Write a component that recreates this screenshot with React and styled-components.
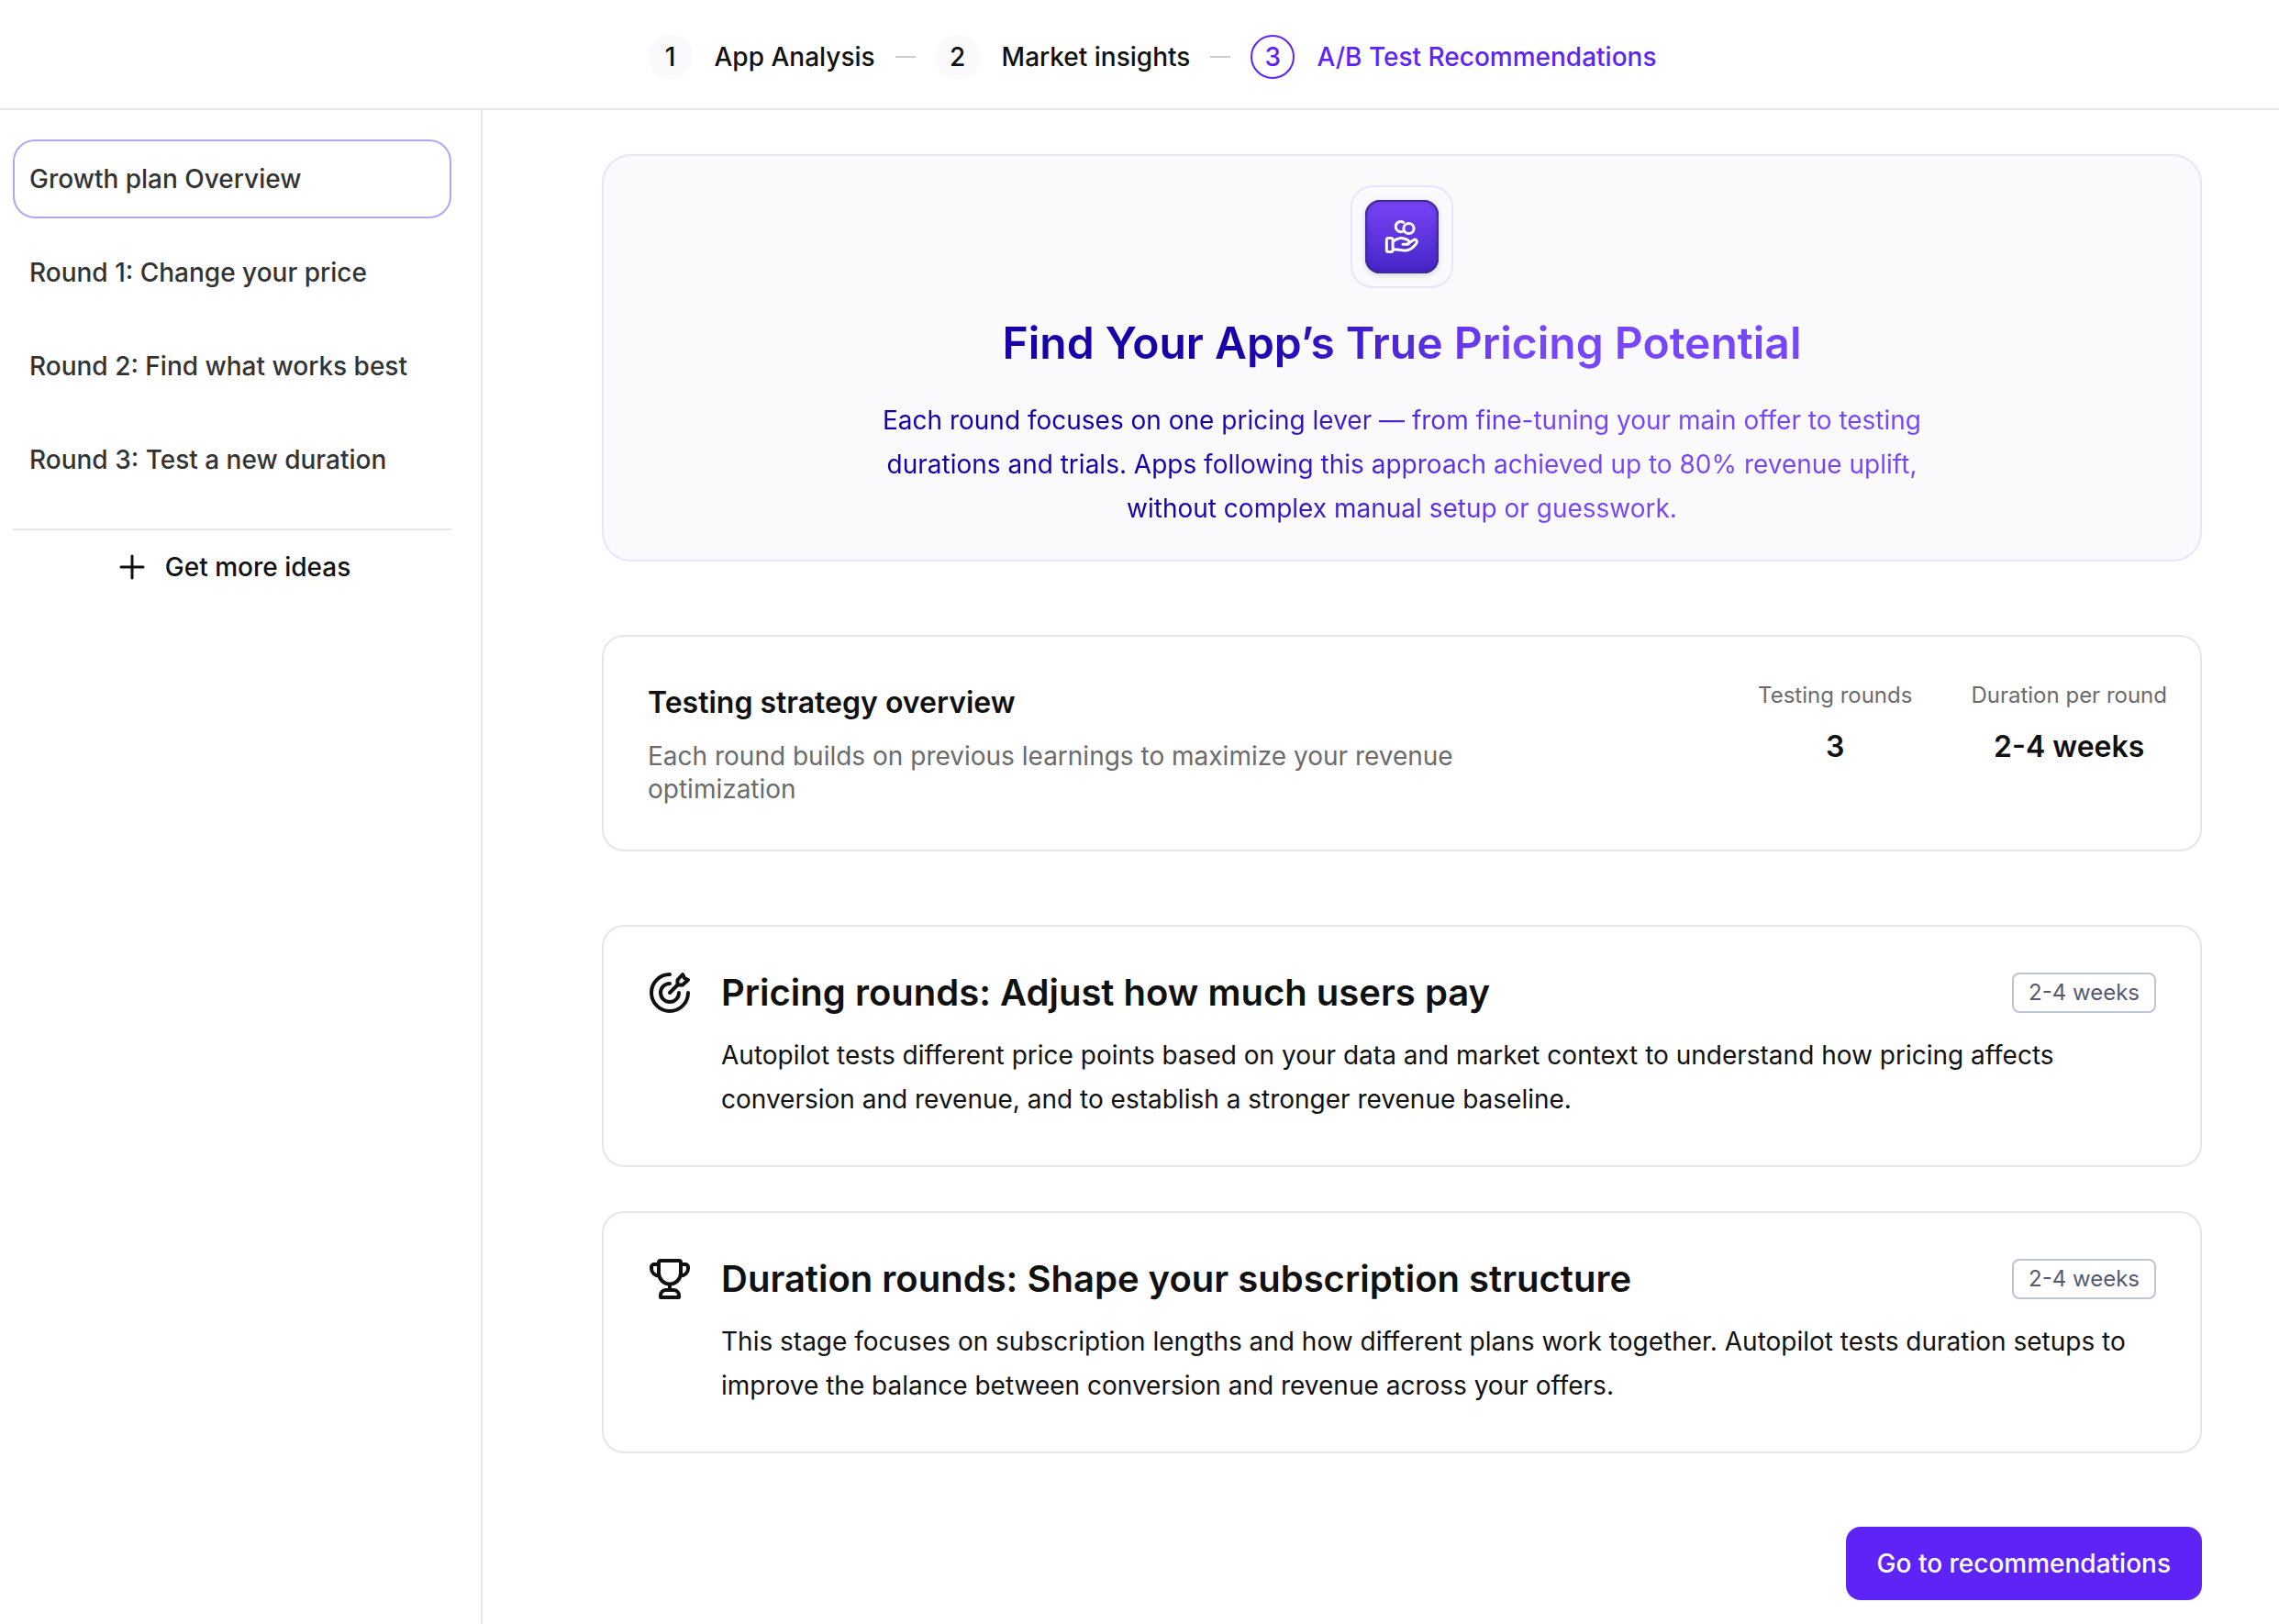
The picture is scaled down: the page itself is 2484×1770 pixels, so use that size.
import React from "react";
import styled, { createGlobalStyle, css } from "styled-components";

const GlobalStyle = createGlobalStyle`
  *, *::before, *::after { box-sizing: border-box; }
  body {
    margin: 0;
    background: #fff;
    color: #111;
    font-family: Inter, "Liberation Sans", sans-serif;
    font-size: 28px;
    line-height: 36px;
  }
  h1, h2, p, ol, ul, dl, dd { margin: 0; padding: 0; }
  ol, ul { list-style: none; }
  button { font: inherit; color: inherit; cursor: pointer; }
`;

const Page = styled.div`
  min-height: 100vh;
  display: flex;
  flex-direction: column;
`;

const Header = styled.header`
  height: 120px;
  padding: 6px 0 0 28px;
  border-bottom: 2px solid #e6e6e6;
  display: flex;
  align-items: center;
  justify-content: center;
`;

const Steps = styled.ol`
  display: flex;
  align-items: center;
  gap: 22px;
`;

const StepItem = styled.li`
  display: flex;
  align-items: center;
  gap: 22px;

  & + &::before {
    content: "";
    width: 22px;
    height: 2px;
    background: #ccc;
  }
`;

const StepLink = styled.a`
  display: flex;
  align-items: center;
  gap: 24px;
  font-weight: 500;
  color: ${(p) => (p.$current ? "#5e24f7" : "#111")};
  text-decoration: none;
`;

const StepNumber = styled.span`
  width: 48px;
  height: 48px;
  border-radius: 50%;
  display: grid;
  place-items: center;
  background: ${(p) => (p.$current ? "#fff" : "#fafafc")};
  border: 2px solid ${(p) => (p.$current ? "#5e24f7" : "#fafafc")};
`;

const Body = styled.div`
  flex: 1;
  display: flex;
`;

const Sidebar = styled.aside`
  flex: 0 0 526px;
  padding: 32px 32px 32px 14px;
  border-right: 2px solid #e6e6e6;
`;

const RoundList = styled.ul`
  display: flex;
  flex-direction: column;
  gap: 16px;
  padding-bottom: 32px;
  border-bottom: 2px solid #e6e6e6;
`;

const RoundButton = styled.button`
  width: 100%;
  height: 86px;
  padding: 0 16px;
  border: 2px solid transparent;
  border-radius: 24px;
  background: #fff;
  color: #333;
  font-weight: 500;
  text-align: left;
  ${(p) => p.$active && css`border-color: #b3a6f0;`}
`;

const IdeasButton = styled.button`
  width: 100%;
  height: 80px;
  padding: 0 0 0 4px;
  border: 0;
  background: none;
  display: flex;
  align-items: center;
  justify-content: center;
  gap: 20px;
  font-weight: 500;
`;

const Main = styled.main`
  flex: 1;
  min-width: 0;
  padding: 48px 84px 26px 130px;
  display: flex;
  flex-direction: column;
  gap: 80px;
`;

const Hero = styled.section`
  padding: 32px;
  border: 2px solid #e8e4fb;
  border-radius: 32px;
  background: #fafafd;
  display: flex;
  flex-direction: column;
  align-items: center;
  gap: 28px;
  text-align: center;
`;

const HeroIconFrame = styled.div`
  padding: 14px;
  border: 2px solid #e8e4fb;
  border-radius: 24px;
`;

const HeroIcon = styled.div`
  width: 80px;
  height: 80px;
  border-radius: 16px;
  display: grid;
  place-items: center;
  background: linear-gradient(#7a45f8, #4524c4);
  box-shadow: inset 0 0 0 2px #3f2a9c, inset 0 0 6px 1px rgba(50, 30, 130, 0.4),
    0 2px 6px rgba(0, 0, 0, 0.16);
`;

const gradientText = css`
  background: linear-gradient(100deg, #1700a8 30%, #7745fa 64%);
  background-clip: text;
  -webkit-background-clip: text;
  color: transparent;
`;

const HeroTitle = styled.h1`
  ${gradientText}
  font-size: 48px;
  line-height: 64px;
  font-weight: 600;
`;

const HeroText = styled.p`
  ${gradientText}
  max-width: 1160px;
  line-height: 48px;
`;

const Card = styled.section`
  padding: 48px;
  border: 2px solid #e6e6e6;
  border-radius: 24px;
  background: #fff;
`;

const OverviewCard = styled(Card)`
  padding-right: 36px;
  display: flex;
  justify-content: space-between;
  gap: 64px;
`;

const OverviewCopy = styled.div`
  flex: 0 1 900px;
  display: flex;
  flex-direction: column;
  gap: 16px;
`;

const OverviewTitle = styled.h2`
  font-size: 32px;
  line-height: 48px;
  font-weight: 600;
`;

const OverviewText = styled.p`
  color: #6b6b6b;
`;

const Stats = styled.dl`
  display: flex;
  gap: 64px;
  text-align: center;
  white-space: nowrap;
`;

const Stat = styled.div`
  display: flex;
  flex-direction: column;
  gap: 16px;
`;

const StatLabel = styled.dt`
  font-size: 24px;
  line-height: 32px;
  color: #6b6b6b;
`;

const StatValue = styled.dd`
  font-size: 32px;
  line-height: 48px;
  font-weight: 600;
`;

const RoundCards = styled.div`
  display: flex;
  flex-direction: column;
  gap: 48px;
`;

const RoundCard = styled(Card)`
  display: grid;
  grid-template-columns: 48px 1fr;
  column-gap: 32px;
`;

const RoundContent = styled.div`
  display: flex;
  flex-direction: column;
  gap: 20px;
`;

const RoundHead = styled.div`
  display: flex;
  align-items: center;
  justify-content: space-between;
`;

const RoundTitle = styled.h2`
  font-size: 40px;
  line-height: 48px;
  font-weight: 600;
`;

const Badge = styled.span`
  padding: 4px 16px;
  border: 2px solid #bfc5d4;
  border-radius: 8px;
  color: #555a72;
  font-size: 24px;
  line-height: 32px;
`;

const RoundText = styled.p`
  line-height: 48px;
`;

const PrimaryButton = styled.button`
  align-self: flex-end;
  height: 80px;
  padding: 0 34px;
  border: 0;
  border-radius: 16px;
  background: #5e24f7;
  color: #fff;
  font-weight: 500;
`;

const PlusIcon = () => (
  <svg width="32" height="32" viewBox="0 0 32 32" fill="none" stroke="currentColor" strokeWidth="3" strokeLinecap="round" aria-hidden="true">
    <path d="M16 4v24M4 16h24" />
  </svg>
);

const HandCoinsIcon = () => (
  <svg width="40" height="40" viewBox="0 0 40 40" fill="none" stroke="#fff" strokeWidth="3" strokeLinecap="round" strokeLinejoin="round" aria-hidden="true">
    <path d="M21.6 4.2A5.6 5.6 0 1 0 20.6 14.4" />
    <circle cx="27.5" cy="11" r="5.6" />
    <rect x="3.3" y="21.6" width="6.8" height="15" rx="2" />
    <path d="M10.5 25c2.6-2.2 5.3-3.4 8.5-3.4 2.5 0 4.6.5 7 1.7 2.8 1.5 2.5 4.800-.6 5h-4.400" />
    <path d="M27 27.2l5-3.300c1.300-.9 2.700-1 3.600-.2 1 1 .9 2.600-.1 3.900-2.900 4-6.800 6.900-11 7.300-2.600.3-4.800 0-7.300-.6-2-.5-4-.5-6.700-.5" />
  </svg>
);

const TargetIcon = () => (
  <svg width="48" height="48" viewBox="0 0 48 48" fill="none" stroke="currentColor" strokeWidth="4" strokeLinecap="round" strokeLinejoin="round" aria-hidden="true">
    <path d="M24 4a20 20 0 1 0 20 20" />
    <path d="M24 14a10 10 0 1 0 10 10" />
    <path d="M24 24l8.5-8.5" />
    <path d="M32.5 15.5V10L38 4l2 4 4 2-6 5.5z" />
  </svg>
);

const TrophyIcon = () => (
  <svg width="48" height="48" viewBox="0 0 48 48" fill="none" stroke="currentColor" strokeWidth="4" strokeLinecap="round" strokeLinejoin="round" aria-hidden="true">
    <path d="M14 4h20a2 2 0 0 1 2 2v11.500a12 12 0 0 1-24 0V6a2 2 0 0 1 2-2z" />
    <path d="M12 8H7a3 3 0 0 0-3 3v1.500c0 4.500 3.500 7.800 8 7.800" />
    <path d="M36 8h5a3 3 0 0 1 3 3v1.500c0 4.500-3.500 7.800-8 7.800" />
    <path d="M24 30v6" />
    <path d="M20 36h8a6 6 0 0 1 6 6v2H14v-2a6 6 0 0 1 6-6z" />
  </svg>
);

const steps = ["App Analysis", "Market insights", "A/B Test Recommendations"];

const rounds = [
  "Growth plan Overview",
  "Round 1: Change your price",
  "Round 2: Find what works best",
  "Round 3: Test a new duration",
];

const stats = [
  { label: "Testing rounds", value: "3" },
  { label: "Duration per round", value: "2-4 weeks" },
];

const stages = [
  {
    Icon: TargetIcon,
    title: "Pricing rounds: Adjust how much users pay",
    text: "Autopilot tests different price points based on your data and market context to understand how pricing affects conversion and revenue, and to establish a stronger revenue baseline.",
  },
  {
    Icon: TrophyIcon,
    title: "Duration rounds: Shape your subscription structure",
    text: "This stage focuses on subscription lengths and how different plans work together. Autopilot tests duration setups to improve the balance between conversion and revenue across your offers.",
  },
];

export default function App() {
  return (
    <Page>
      <GlobalStyle />
      <Header>
        <nav>
          <Steps>
            {steps.map((label, i) => (
              <StepItem key={label}>
                <StepLink href={`#step-${i + 1}`} $current={i === 2} aria-current={i === 2 ? "step" : undefined}>
                  <StepNumber $current={i === 2}>{i + 1}</StepNumber>
                  {label}
                </StepLink>
              </StepItem>
            ))}
          </Steps>
        </nav>
      </Header>
      <Body>
        <Sidebar>
          <RoundList>
            {rounds.map((label, i) => (
              <li key={label}>
                <RoundButton type="button" $active={i === 0}>{label}</RoundButton>
              </li>
            ))}
          </RoundList>
          <IdeasButton type="button">
            <PlusIcon />
            Get more ideas
          </IdeasButton>
        </Sidebar>
        <Main>
          <Hero>
            <HeroIconFrame>
              <HeroIcon>
                <HandCoinsIcon />
              </HeroIcon>
            </HeroIconFrame>
            <HeroTitle>Find Your App’s True Pricing Potential</HeroTitle>
            <HeroText>
              Each round focuses on one pricing lever — from fine-tuning your main offer to testing
              durations and trials. Apps following this approach achieved up to 80% revenue uplift,
              without complex manual setup or guesswork.
            </HeroText>
          </Hero>
          <OverviewCard>
            <OverviewCopy>
              <OverviewTitle>Testing strategy overview</OverviewTitle>
              <OverviewText>
                Each round builds on previous learnings to maximize your revenue optimization
              </OverviewText>
            </OverviewCopy>
            <Stats>
              {stats.map(({ label, value }) => (
                <Stat key={label}>
                  <StatLabel>{label}</StatLabel>
                  <StatValue>{value}</StatValue>
                </Stat>
              ))}
            </Stats>
          </OverviewCard>
          <RoundCards>
            {stages.map(({ Icon, title, text }) => (
              <RoundCard key={title}>
                <Icon />
                <RoundContent>
                  <RoundHead>
                    <RoundTitle>{title}</RoundTitle>
                    <Badge>2-4 weeks</Badge>
                  </RoundHead>
                  <RoundText>{text}</RoundText>
                </RoundContent>
              </RoundCard>
            ))}
          </RoundCards>
          <PrimaryButton type="button">Go to recommendations</PrimaryButton>
        </Main>
      </Body>
    </Page>
  );
}
